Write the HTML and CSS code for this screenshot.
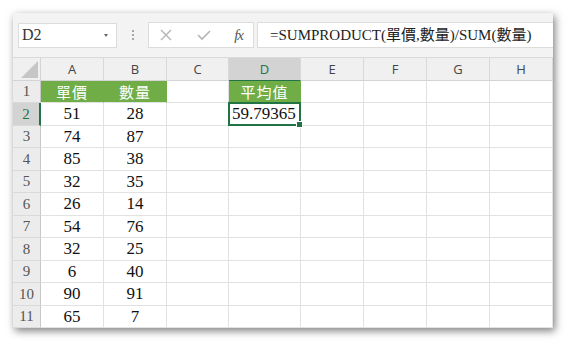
FILE: index.html
```html
<!DOCTYPE html>
<html>
<head>
  <title>SUMPRODUCT</title>
  <link rel="stylesheet" href="styles.css">
</head>
<body>
  <div class="window">
    <div class="toolbar">
      <div class="namebox">
        <span>D2</span>
        <span class="arrow"></span>
      </div>
      <div class="dots"><i></i><i></i><i></i></div>
      <div class="fxbox">
        <svg width="14" height="14" viewBox="0 0 14 14"><path d="M2 2 L12 12 M12 2 L2 12" stroke="#b4b4b4" stroke-width="1.4" fill="none"/></svg>
        <svg width="16" height="14" viewBox="0 0 16 14"><path d="M2 7 L6 11 L14 3" stroke="#b4b4b4" stroke-width="1.6" fill="none"/></svg>
        <span class="fx">fx</span>
      </div>
      <div class="formula">=SUMPRODUCT(單價,數量)/SUM(數量)</div>
    </div>

    <div class="sheet">
      <div class="corner"><span></span></div>
      <div class="colhead">A</div>
      <div class="colhead">B</div>
      <div class="colhead">C</div>
      <div class="colhead active">D</div>
      <div class="colhead">E</div>
      <div class="colhead">F</div>
      <div class="colhead">G</div>
      <div class="colhead">H</div>

      <div class="rowhead">1</div>
      <div class="cell green">單價</div>
      <div class="cell green">數量</div>
      <div class="cell"></div>
      <div class="cell green">平均值</div>
      <div class="cell"></div><div class="cell"></div><div class="cell"></div><div class="cell"></div>

      <div class="rowhead active">2</div>
      <div class="cell num">51</div>
      <div class="cell num">28</div>
      <div class="cell"></div>
      <div class="cell selected">59.79365<span class="handle"></span></div>
      <div class="cell"></div><div class="cell"></div><div class="cell"></div><div class="cell"></div>

      <div class="rowhead">3</div>
      <div class="cell num">74</div><div class="cell num">87</div>
      <div class="cell"></div><div class="cell"></div><div class="cell"></div><div class="cell"></div><div class="cell"></div><div class="cell"></div>

      <div class="rowhead">4</div>
      <div class="cell num">85</div><div class="cell num">38</div>
      <div class="cell"></div><div class="cell"></div><div class="cell"></div><div class="cell"></div><div class="cell"></div><div class="cell"></div>

      <div class="rowhead">5</div>
      <div class="cell num">32</div><div class="cell num">35</div>
      <div class="cell"></div><div class="cell"></div><div class="cell"></div><div class="cell"></div><div class="cell"></div><div class="cell"></div>

      <div class="rowhead">6</div>
      <div class="cell num">26</div><div class="cell num">14</div>
      <div class="cell"></div><div class="cell"></div><div class="cell"></div><div class="cell"></div><div class="cell"></div><div class="cell"></div>

      <div class="rowhead">7</div>
      <div class="cell num">54</div><div class="cell num">76</div>
      <div class="cell"></div><div class="cell"></div><div class="cell"></div><div class="cell"></div><div class="cell"></div><div class="cell"></div>

      <div class="rowhead">8</div>
      <div class="cell num">32</div><div class="cell num">25</div>
      <div class="cell"></div><div class="cell"></div><div class="cell"></div><div class="cell"></div><div class="cell"></div><div class="cell"></div>

      <div class="rowhead">9</div>
      <div class="cell num">6</div><div class="cell num">40</div>
      <div class="cell"></div><div class="cell"></div><div class="cell"></div><div class="cell"></div><div class="cell"></div><div class="cell"></div>

      <div class="rowhead">10</div>
      <div class="cell num">90</div><div class="cell num">91</div>
      <div class="cell"></div><div class="cell"></div><div class="cell"></div><div class="cell"></div><div class="cell"></div><div class="cell"></div>

      <div class="rowhead">11</div>
      <div class="cell num">65</div><div class="cell num">7</div>
      <div class="cell"></div><div class="cell"></div><div class="cell"></div><div class="cell"></div><div class="cell"></div><div class="cell"></div>
    </div>
  </div>
</body>
</html>
```

FILE: styles.css
```css
body {
  margin: 0;
  background: #fff;
  font-family: 'Liberation Serif', 'Noto Sans CJK TC', serif;
}

.window {
  margin: 13px;
  width: 540px;
  height: 315px;
  overflow: hidden;
  background: #fff;
  box-shadow: 2px 3px 8px rgba(0, 0, 0, 0.5);
}

/* formula bar */
.toolbar {
  height: 45px;
  box-sizing: border-box;
  background: #f3f3f3;
  border-bottom: 1px solid #dadada;
  display: flex;
  align-items: center;
  padding: 0 0 0 5px;
}

.namebox {
  width: 99px;
  height: 25px;
  box-sizing: border-box;
  background: #fff;
  border: 1px solid #dcdcdc;
  display: flex;
  align-items: center;
  justify-content: space-between;
  padding: 0 8px 0 3px;
  font-family: 'Liberation Serif', serif;
  font-size: 16px;
  color: #333;
}

.arrow {
  width: 0;
  height: 0;
  border-left: 2.5px solid transparent;
  border-right: 2.5px solid transparent;
  border-top: 3px solid #666;
}

.dots {
  width: 31px;
  display: flex;
  flex-direction: column;
  align-items: center;
  gap: 2px;
}

.dots i {
  width: 2px;
  height: 2px;
  background: #a8a8a8;
}

.fxbox {
  width: 106px;
  height: 26px;
  box-sizing: border-box;
  background: #fff;
  border: 1px solid #dcdcdc;
  display: flex;
  align-items: center;
  justify-content: space-between;
  padding: 0 10px 0 10px;
}

.fx {
  font-style: italic;
  font-size: 15px;
  color: #555;
  letter-spacing: -1px;
}

.formula {
  flex: 1;
  margin-left: 3px;
  height: 26px;
  box-sizing: border-box;
  background: #fff;
  border: 1px solid #dcdcdc;
  border-right: none;
  padding-left: 12px;
  font-size: 15px;
  line-height: 24px;
  color: #222;
  white-space: nowrap;
}

/* grid */
.sheet {
  display: grid;
  grid-template-columns: 28px 63px 63px 62px 72px 63px 63px 63px 63px;
  grid-template-rows: 23px 22px 23px 22px 23px 22px 23px 22px 23px 22px 23px 22px;
}

.corner {
  background: #f0f0f0;
  border-right: 1px solid #d4d4d4;
  border-bottom: 1px solid #d4d4d4;
  display: flex;
  align-items: flex-end;
  justify-content: flex-end;
  padding: 0 2px 2px 0;
}

.corner span {
  width: 0;
  height: 0;
  border-left: 17px solid transparent;
  border-bottom: 17px solid #c6c6c6;
}

.colhead {
  background: #f0f0f0;
  border-right: 1px solid #d9d9d9;
  border-bottom: 1px solid #d4d4d4;
  font-family: 'Open Sans', 'Liberation Sans', sans-serif;
  font-size: 13px;
  color: #444;
  display: flex;
  align-items: center;
  justify-content: center;
}

.colhead.active {
  background: #d3d3d3;
  color: #217346;
  border-bottom: 1px solid #217346;
}

.rowhead {
  background: #ececec;
  border-right: 1px solid #c8c8c8;
  border-bottom: 1px solid #dadada;
  font-size: 15px;
  color: #555;
  display: flex;
  align-items: center;
  justify-content: center;
}

.rowhead.active {
  background: #d3d3d3;
  color: #217346;
  border-right: 2px solid #217346;
}

.cell {
  position: relative;
  border-right: 1px solid #e2e2e2;
  border-bottom: 1px solid #e2e2e2;
  font-size: 17px;
  color: #111;
  display: flex;
  align-items: center;
}

.cell.num {
  justify-content: center;
}

.cell.green {
  background: #70ad47;
  color: #fff;
  justify-content: center;
  font-family: 'Noto Sans CJK TC', sans-serif;
  font-size: 15px;
  letter-spacing: 1px;
  border-right-color: #70ad47;
}

.cell.selected {
  padding-left: 3px;
}

.cell.selected::after {
  content: '';
  position: absolute;
  left: -1px;
  top: -1px;
  right: -1px;
  bottom: -1px;
  border: 2px solid #217346;
}

.handle {
  position: absolute;
  right: -3px;
  bottom: -3px;
  width: 5px;
  height: 5px;
  background: #217346;
  border: 1px solid #fff;
  z-index: 2;
}
```
